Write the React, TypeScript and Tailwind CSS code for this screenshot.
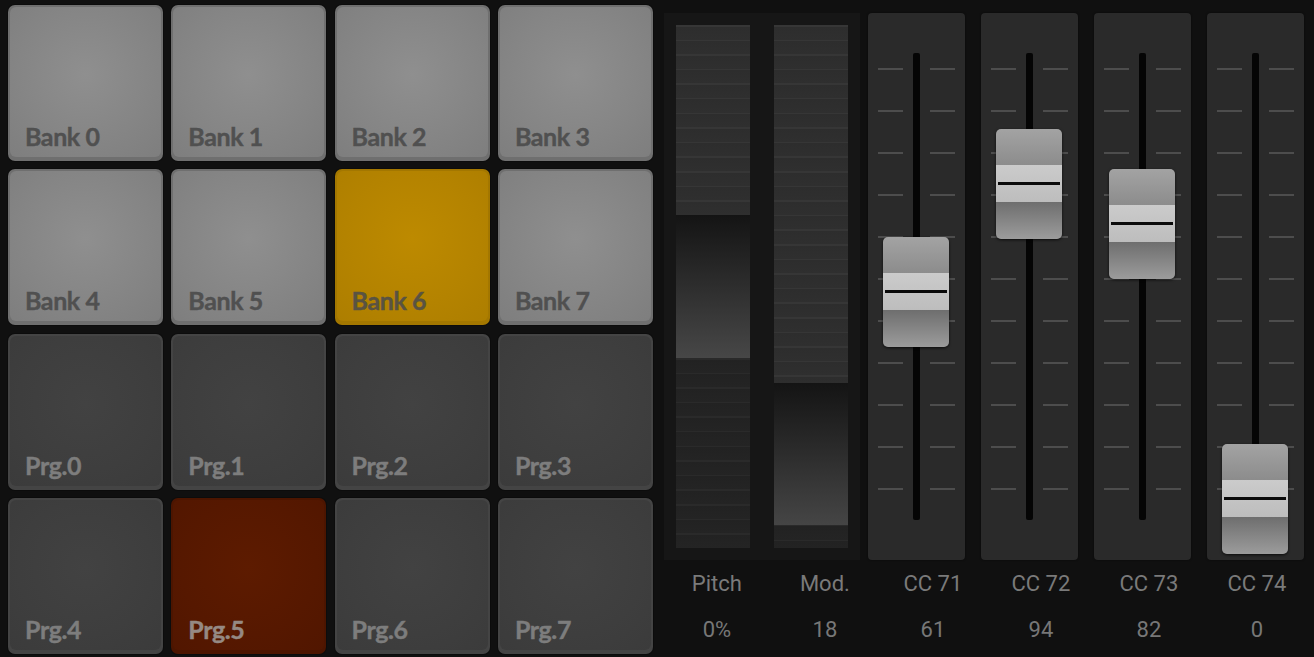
const pads = [
  { label: "Bank 0", kind: "light" },
  { label: "Bank 1", kind: "light" },
  { label: "Bank 2", kind: "light" },
  { label: "Bank 3", kind: "light" },
  { label: "Bank 4", kind: "light" },
  { label: "Bank 5", kind: "light" },
  { label: "Bank 6", kind: "yellow" },
  { label: "Bank 7", kind: "light" },
  { label: "Prg.0", kind: "dark" },
  { label: "Prg.1", kind: "dark" },
  { label: "Prg.2", kind: "dark" },
  { label: "Prg.3", kind: "dark" },
  { label: "Prg.4", kind: "dark" },
  { label: "Prg.5", kind: "red" },
  { label: "Prg.6", kind: "dark" },
  { label: "Prg.7", kind: "dark" },
]

const padStyles: Record<string, { rim: string; face: string; text: string }> = {
  light: {
    rim: "bg-[#6f6f6f]",
    face: "bg-[radial-gradient(circle_at_50%_45%,#8f8f8f_0%,#858585_60%,#7e7e7e_100%)]",
    text: "text-[#505050]",
  },
  yellow: {
    rim: "bg-[#a37700]",
    face: "bg-[radial-gradient(circle_at_50%_45%,#bd8a00_0%,#b48300_60%,#ad7e00_100%)]",
    text: "text-[#595342]",
  },
  dark: {
    rim: "bg-[#444444]",
    face: "bg-[radial-gradient(circle_at_50%_45%,#424242_0%,#3e3e3e_60%,#3b3b3b_100%)]",
    text: "text-[#7d7d7d]",
  },
  red: {
    rim: "bg-[#4c1500]",
    face: "bg-[radial-gradient(circle_at_50%_45%,#5d1b00_0%,#561800_60%,#511600_100%)]",
    text: "text-[#958983]",
  },
}

// fader values, as knob offset from panel top
const faders = [
  { label: "CC 71", value: "61", top: 224 },
  { label: "CC 72", value: "94", top: 116 },
  { label: "CC 73", value: "82", top: 156 },
  { label: "CC 74", value: "0", top: 431 },
]

const readouts = [
  { label: "Pitch", value: "0%" },
  { label: "Mod.", value: "18" },
  ...faders.map((f) => ({ label: f.label, value: f.value })),
]

const stripeLight =
  "bg-[repeating-linear-gradient(to_bottom,#363636_0px,#363636_1.5px,#2d2d2d_1.5px,#2f2f2f_14.6px)]"
const stripeDark =
  "bg-[repeating-linear-gradient(to_bottom,#2a2a2a_0px,#2a2a2a_1.5px,#222222_1.5px,#242424_14.6px)]"

function Pad({ label, kind }: { label: string; kind: string }) {
  const s = padStyles[kind]
  return (
    <div className={`w-[155px] h-[156px] rounded-[7px] p-[2px] pb-[4px] ${s.rim} shadow-[0_0_0_1px_rgba(0,0,0,0.25)]`}>
      <div className={`h-full rounded-[6px] ${s.face} flex items-end pl-[15px] pb-[8px]`}>
        <span
          className={`${s.text} text-[25px] font-bold tracking-[-0.4px] leading-none [-webkit-text-stroke:0.4px_currentColor]`}
          style={{ fontFamily: "Lato, 'Open Sans', sans-serif" }}
        >
          {label}
        </span>
      </div>
    </div>
  )
}

function Fader({ top }: { top: number }) {
  const ticks = Array.from({ length: 11 }, (_, i) => 56 + i * 42)
  return (
    <div className="relative w-[97px] h-full rounded-[4px] bg-[#2a2a2a] shadow-[0_0_2px_rgba(0,0,0,0.6)]">
      <svg width="97" height="547" className="block">
        {ticks.map((y) => (
          <g key={y} stroke="#575757" strokeWidth="1.6">
            <line x1="10" y1={y} x2="35" y2={y} />
            <line x1="62" y1={y} x2="87" y2={y} />
          </g>
        ))}
        <rect x="45" y="40" width="7" height="467" rx="2" fill="#050505" />
      </svg>
      <div
        className="absolute left-[15px] w-[66px] h-[110px] rounded-[5px] overflow-hidden flex flex-col shadow-[0_1px_3px_rgba(0,0,0,0.7)]"
        style={{ top }}
      >
        <div className="h-[36px] bg-[linear-gradient(to_bottom,#a3a3a3,#8c8c8c)]" />
        <div className="h-[37px] bg-[linear-gradient(to_bottom,#cbcbcb,#bdbdbd)] flex items-center px-[2px]">
          <div className="w-full h-[3px] bg-[#0a0a0a]" />
        </div>
        <div className="flex-1 bg-[linear-gradient(to_bottom,#6e6e6e,#9c9c9c)]" />
      </div>
    </div>
  )
}

export default function App() {
  return (
    <div className="w-[1314px] h-[657px] bg-[#101010] flex overflow-hidden">
      {/* pad grid */}
      <div className="pl-[8px] pt-[5px]">
        <div className="grid grid-cols-[repeat(4,155px)] gap-x-[8.3px] gap-y-[8.3px]">
          {pads.map((p) => (
            <Pad key={p.label} label={p.label} kind={p.kind} />
          ))}
        </div>
      </div>

      {/* controllers */}
      <div className="ml-[10px] pt-[13px] flex flex-col">
        <div className="flex h-[547px]">
          <div className="ml-[1px] w-[196px] h-full bg-[#161616] p-[12px] flex gap-[24px]">
            {/* pitch */}
            <div className="w-[74px] h-full flex flex-col">
              <div className={`h-[190px] ${stripeLight}`} />
              <div className="h-[143px] bg-[linear-gradient(to_bottom,#141414,#474747)]" />
              <div className={`flex-1 ${stripeDark}`} />
            </div>
            {/* mod */}
            <div className="w-[74px] h-full flex flex-col">
              <div className={`h-[358px] ${stripeLight}`} />
              <div className="h-[142px] bg-[linear-gradient(to_bottom,#141414,#454545)]" />
              <div className={`flex-1 ${stripeDark}`} />
            </div>
          </div>
          <div className="ml-[8px] flex gap-[16px] h-full">
            {faders.map((f) => (
              <Fader key={f.label} top={f.top} />
            ))}
          </div>
        </div>

        <div
          className="grid grid-cols-[repeat(6,108px)] text-[#7a7a7a]"
          style={{ fontFamily: "Roboto, 'Liberation Sans', sans-serif" }}
        >
          {readouts.map((r) => (
            <div key={r.label} className="flex flex-col items-center">
              <div className="h-[48px] flex items-center text-[22px] leading-none">{r.label}</div>
              <div className="h-[44px] flex items-center text-[22px] leading-none text-[#777777]">{r.value}</div>
            </div>
          ))}
        </div>
      </div>
    </div>
  )
}
